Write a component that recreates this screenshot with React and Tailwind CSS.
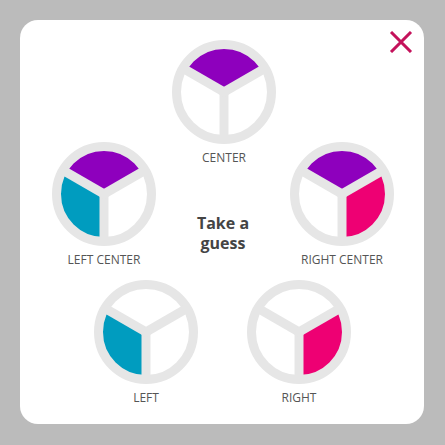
import React from 'react'

const PURPLE = '#8e00bd'
const TEAL = '#009cbf'
const PINK = '#ee0073'
const RING = '#e6e6e6'

// sector paths on a 104 box, centre 52/52, radius 44
const SECTORS = {
  top: 'M52 52 L13.9 30 A44 44 0 0 1 90.1 30 Z',
  left: 'M52 52 L52 96 A44 44 0 0 1 13.9 30 Z',
  right: 'M52 52 L90.1 30 A44 44 0 0 1 52 96 Z',
}

function Wheel({ top, left, right }) {
  const fills = { top, left, right }
  return (
    <svg width="104" height="104" viewBox="0 0 104 104">
      <circle cx="52" cy="52" r="46" fill="#ffffff" />
      {Object.entries(fills).map(([k, c]) =>
        c ? <path key={k} d={SECTORS[k]} fill={c} /> : null
      )}
      <circle cx="52" cy="52" r="47.5" fill="none" stroke={RING} strokeWidth="9" />
      <line x1="52" y1="52" x2="52" y2="98" stroke={RING} strokeWidth="9" />
      <line x1="52" y1="52" x2="12.2" y2="29" stroke={RING} strokeWidth="9" />
      <line x1="52" y1="52" x2="91.8" y2="29" stroke={RING} strokeWidth="9" />
      <circle cx="52" cy="52" r="4.6" fill={RING} />
    </svg>
  )
}

function Choice({ label, ...fills }) {
  return (
    <button className="flex flex-col items-center w-[104px] shrink-0">
      <Wheel {...fills} />
      <span className="mt-[6px] text-[12px] leading-[16px] text-[#555555] uppercase whitespace-nowrap">
        {label}
      </span>
    </button>
  )
}

export default function App() {
  return (
    <div
      className="w-[445px] h-[445px] bg-[#bbbbbb] p-5"
      style={{ fontFamily: '"Open Sans", "Noto Sans", sans-serif' }}
    >
      <div className="relative w-[404px] h-[404px] bg-white rounded-[18px] pt-5">
        {/* Close */}
        <button className="absolute top-[11px] right-[11px] w-6 h-[22px]">
          <svg width="24" height="22" viewBox="0 0 24 22">
            <path d="M2 1 L22 21 M22 1 L2 21" stroke="#c4125b" strokeWidth="3" />
          </svg>
        </button>

        {/* Center */}
        <div className="flex justify-center pl-1">
          <Choice label="Center" top={PURPLE} />
        </div>

        {/* Left center / prompt / right center */}
        <div className="flex -mt-[24px] pl-[32px] pr-[30px]">
          <Choice label="Left Center" top={PURPLE} left={TEAL} />
          <div className="flex-1 pt-[71px] text-center text-[16px] leading-[20px] font-bold text-[#444444]">
            Take a<br />guess
          </div>
          <Choice label="Right Center" top={PURPLE} right={PINK} />
        </div>

        {/* Left / right */}
        <div className="flex mt-3 pl-[74px] gap-[49px]">
          <Choice label="Left" left={TEAL} />
          <Choice label="Right" right={PINK} />
        </div>
      </div>
    </div>
  )
}
